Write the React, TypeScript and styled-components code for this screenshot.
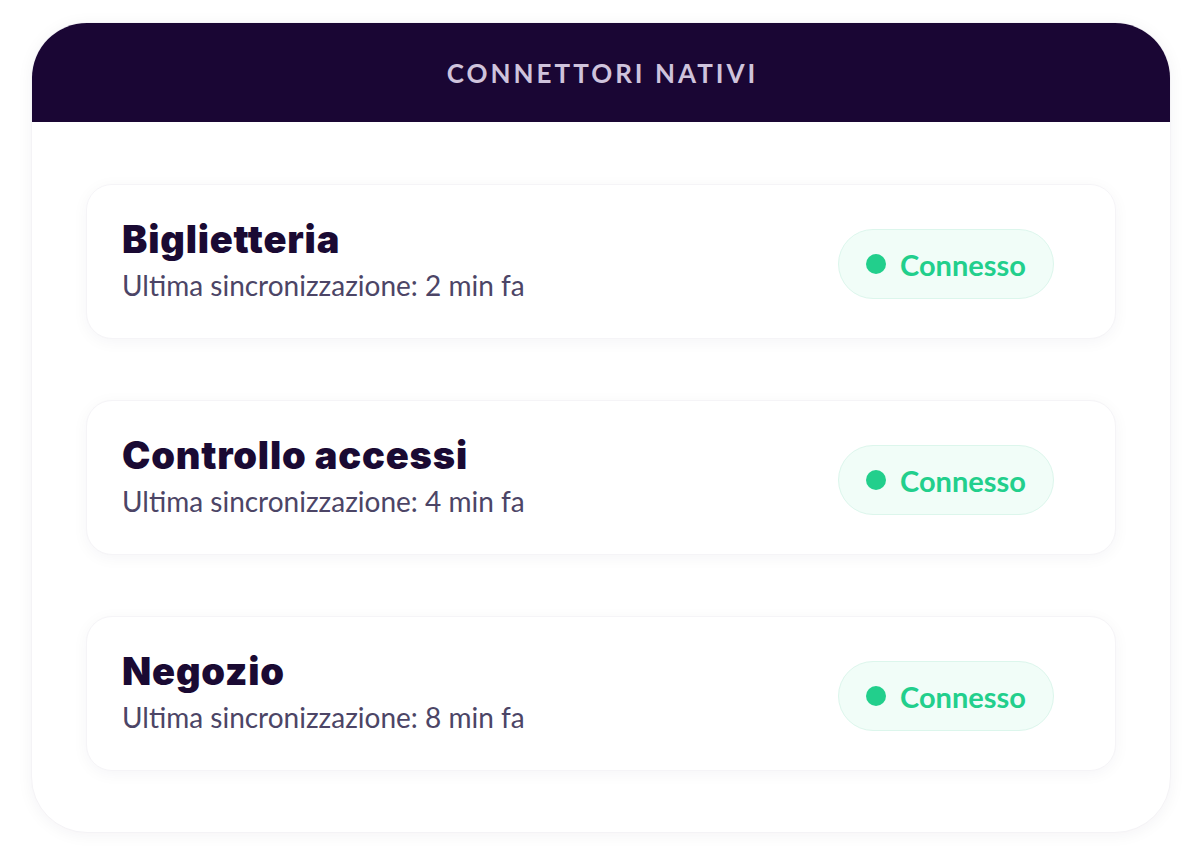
import React from "react";
import styled, { createGlobalStyle } from "styled-components";

const Global = createGlobalStyle`
  html, body { margin: 0; padding: 0; background: #ffffff; }
  body { font-family: "Lato", "Open Sans", sans-serif; }
`;

const Page = styled.div`
  width: 1200px;
  height: 853px;
  padding: 22px 29px 20px 31px;
  box-sizing: border-box;
`;

const Card = styled.section`
  width: 1140px;
  height: 811px;
  box-sizing: border-box;
  border-radius: 56px;
  background: #ffffff;
  overflow: hidden;
  box-shadow: 0 2px 16px rgba(30, 10, 60, 0.05);
  border: 1px solid #f4f3f6;
  display: flex;
  flex-direction: column;
`;

const Header = styled.header`
  height: 99px;
  flex: none;
  background: #1a0634;
  display: flex;
  align-items: center;
  justify-content: center;
`;

const HeaderTitle = styled.h1`
  margin: 0;
  color: #cfc3dc;
  font-family: "Lato", sans-serif;
  font-weight: 700;
  font-size: 26px;
  letter-spacing: 3px;
  text-transform: uppercase;
  padding-left: 3px;
`;

const List = styled.div`
  flex: 1;
  display: flex;
  flex-direction: column;
  gap: 61px;
  padding: 62px 54px 0 54px;
`;

const Row = styled.div`
  height: 155px;
  box-sizing: border-box;
  border-radius: 26px;
  background: #ffffff;
  border: 1px solid #f5f4f7;
  box-shadow: 0 3px 16px rgba(30, 10, 60, 0.045);
  display: flex;
  align-items: center;
  justify-content: space-between;
  padding: 0 61px 0 35px;
`;

const Info = styled.div`
  display: flex;
  flex-direction: column;
  gap: 8px;
  padding-bottom: 5px;
`;

const Name = styled.div`
  color: #1a0a33;
  font-family: "Inter", sans-serif;
  font-weight: 900;
  font-size: 38px;
  line-height: 44px;
  letter-spacing: 0.8px;
`;

const Sync = styled.div`
  color: #4c4566;
  font-family: "Lato", sans-serif;
  font-weight: 400;
  font-size: 28px;
  line-height: 32px;
`;

const Badge = styled.div`
  height: 70px;
  width: 216px;
  margin-top: 4px;
  box-sizing: border-box;
  border-radius: 35px;
  background: #f1fdf8;
  border: 1px solid #dcf6ec;
  display: flex;
  align-items: center;
  gap: 14px;
  padding-left: 27px;
`;

const Dot = styled.span`
  width: 20px;
  height: 20px;
  border-radius: 50%;
  background: #22cf8c;
  flex: none;
`;

const BadgeText = styled.span`
  color: #22cf8c;
  font-family: "Lato", sans-serif;
  font-weight: 700;
  font-size: 29px;
  padding-top: 1px;
`;

const connectors = [
  { name: "Biglietteria", mins: 2 },
  { name: "Controllo accessi", mins: 4 },
  { name: "Negozio", mins: 8 },
];

export default function App() {
  return (
    <>
      <Global />
      <Page>
        <Card>
          <Header>
            <HeaderTitle>Connettori nativi</HeaderTitle>
          </Header>
          <List>
            {connectors.map((c) => (
              <Row key={c.name}>
                <Info>
                  <Name>{c.name}</Name>
                  <Sync>Ultima sincronizzazione: {c.mins} min fa</Sync>
                </Info>
                <Badge>
                  <Dot />
                  <BadgeText>Connesso</BadgeText>
                </Badge>
              </Row>
            ))}
          </List>
        </Card>
      </Page>
    </>
  );
}
